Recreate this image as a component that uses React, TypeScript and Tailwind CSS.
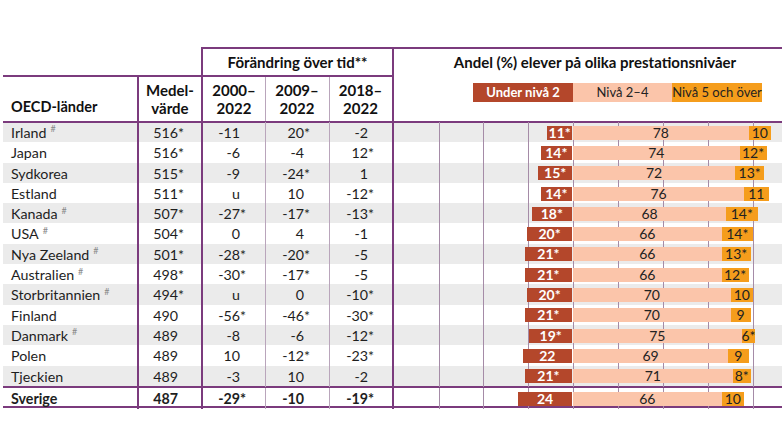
import React from 'react';

type Row = {
  land: string;
  hash?: boolean;
  medel: string;
  d00: string;
  d09: string;
  d18: string;
  under: string;
  mid: string;
  top: string;
};

const rows: Row[] = [
  { land: 'Irland', hash: true, medel: '516*', d00: '-11', d09: '20*', d18: '-2', under: '11*', mid: '78', top: '10' },
  { land: 'Japan', medel: '516*', d00: '-6', d09: '-4', d18: '12*', under: '14*', mid: '74', top: '12*' },
  { land: 'Sydkorea', medel: '515*', d00: '-9', d09: '-24*', d18: '1', under: '15*', mid: '72', top: '13*' },
  { land: 'Estland', medel: '511*', d00: 'u', d09: '10', d18: '-12*', under: '14*', mid: '76', top: '11' },
  { land: 'Kanada', hash: true, medel: '507*', d00: '-27*', d09: '-17*', d18: '-13*', under: '18*', mid: '68', top: '14*' },
  { land: 'USA', hash: true, medel: '504*', d00: '0', d09: '4', d18: '-1', under: '20*', mid: '66', top: '14*' },
  { land: 'Nya Zeeland', hash: true, medel: '501*', d00: '-28*', d09: '-20*', d18: '-5', under: '21*', mid: '66', top: '13*' },
  { land: 'Australien', hash: true, medel: '498*', d00: '-30*', d09: '-17*', d18: '-5', under: '21*', mid: '66', top: '12*' },
  { land: 'Storbritannien', hash: true, medel: '494*', d00: 'u', d09: '0', d18: '-10*', under: '20*', mid: '70', top: '10' },
  { land: 'Finland', medel: '490', d00: '-56*', d09: '-46*', d18: '-30*', under: '21*', mid: '70', top: '9' },
  { land: 'Danmark', hash: true, medel: '489', d00: '-8', d09: '-6', d18: '-12*', under: '19*', mid: '75', top: '6*' },
  { land: 'Polen', medel: '489', d00: '10', d09: '-12*', d18: '-23*', under: '22', mid: '69', top: '9' },
  { land: 'Tjeckien', medel: '489', d00: '-3', d09: '10', d18: '-2', under: '21*', mid: '71', top: '8*' },
];

const sverige: Row = { land: 'Sverige', medel: '487', d00: '-29*', d09: '-10', d18: '-19*', under: '24', mid: '66', top: '10' };

// 20 procentenheter = 45px
const PX = 2.25;
const gridLines = ['left-[45px]', 'left-[89px]', 'left-[134px]', 'left-[179px]', 'left-[224px]', 'left-[269px]', 'left-[314px]', 'left-[359px]'];

function Num({ v, wide }: { v: string; wide?: boolean }) {
  const star = v.endsWith('*');
  const n = star ? v.slice(0, -1) : v;
  return (
    <div className="flex h-full items-center">
      <span className={wide ? 'w-[39px] text-right' : 'w-[37px] text-right'}>{n}</span>
      {star && <span>*</span>}
    </div>
  );
}

function Bars({ r }: { r: Row }) {
  const num = (s: string) => parseFloat(s);
  return (
    <div className="relative h-full border-l-2 border-[#7b3b7d]">
      {gridLines.map((g) => (
        <div key={g} className={`absolute top-0 bottom-0 w-px bg-[#a58ba7] ${g}`} />
      ))}
      <div className="relative z-10 flex h-full items-center text-[14px] leading-none">
        <div className="flex w-[178px] justify-end">
          <div
            className="flex h-[14px] items-center justify-center whitespace-nowrap bg-[#b4472b] font-bold text-white"
            style={{ width: num(r.under) * PX }}
          >
            {r.under}
          </div>
        </div>
        <div
          className="ml-px flex h-[14px] items-center justify-center bg-[#fbc5aa] font-normal text-[#222]"
          style={{ width: num(r.mid) * PX }}
        >
          {r.mid}
        </div>
        <div
          className="flex h-[14px] items-center justify-center whitespace-nowrap bg-[#f59d1c] font-normal text-[#222]"
          style={{ width: num(r.top) * PX }}
        >
          {r.top}
        </div>
      </div>
    </div>
  );
}

function DataRow({ r, striped, last }: { r: Row; striped?: boolean; last?: boolean }) {
  return (
    <div
      className={`grid grid-cols-[134px_64px_64px_64px_63px_390px] ${
        last ? 'h-[22px] border-y-2 border-[#7b3b7d] font-bold' : 'h-[20.3px]'
      } ${striped ? 'bg-[#ebebeb]' : 'bg-white'}`}
    >
      <div className="flex items-center pl-[8px]">
        {r.land}
        {r.hash && <span className="ml-[4px] -mt-[7px] text-[9px] text-[#888]">#</span>}
      </div>
      <div className="border-l-2 border-[#7b3b7d]">
        <Num v={r.medel} wide />
      </div>
      <div className="border-l-2 border-[#7b3b7d]">
        <Num v={r.d00} />
      </div>
      <div className="border-l border-[#b9a5bb] pl-px">
        <Num v={r.d09} />
      </div>
      <div className="border-l border-[#b9a5bb] pl-px">
        <Num v={r.d18} />
      </div>
      <Bars r={r} />
    </div>
  );
}

export default function App() {
  return (
    <div className="h-[439px] w-[782px] overflow-hidden bg-white pl-[3px] pt-[47px] font-['Lato',sans-serif] text-[14.25px] text-[#1e1e1e]">
      {/* Rubriker */}
      <div className="grid grid-cols-[134px_64px_64px_64px_63px_390px] grid-rows-[28px_48px] text-[15px] font-bold text-[#111]">
        <div className="col-span-2" />
        <div className="col-span-3 flex items-center justify-center border-l-2 border-t-2 border-[#7b3b7d]">
          Förändring över tid**
        </div>
        <div className="row-span-2 flex flex-col border-y-2 border-l-2 border-[#7b3b7d]">
          <div className="flex h-[26px] items-center justify-center pl-[14px]">
            Andel (%) elever på olika prestationsnivåer
          </div>
          <div className="mt-[8px] flex h-[19px] whitespace-nowrap pl-[79px] text-[13px]">
            <div className="flex w-[100px] items-center justify-center bg-[#b4472b] text-white">Under nivå 2</div>
            <div className="flex w-[99px] items-center justify-center bg-[#fbc5aa] font-normal text-[#222]">Nivå 2–4</div>
            <div className="flex w-[90px] items-center justify-center bg-[#f59d1c] font-normal text-[#222]">Nivå 5 och över</div>
          </div>
        </div>
        <div className="flex items-end border-y-2 border-[#7b3b7d] pb-[3px] pl-[8px] text-[14.5px]">OECD-länder</div>
        <div className="flex flex-col items-center justify-center border-y-2 border-l-2 border-[#7b3b7d] leading-[18px]">
          <span>Medel-</span>
          <span>värde</span>
        </div>
        <div className="flex flex-col items-center justify-center border-y-2 border-l-2 border-[#7b3b7d] leading-[18px]">
          <span>2000–</span>
          <span>2022</span>
        </div>
        <div className="flex flex-col items-center justify-center border-y-2 border-[#7b3b7d] leading-[18px]">
          <div className="-ml-px flex h-full w-full flex-col items-center justify-center border-l border-[#b9a5bb]">
            <span>2009–</span>
            <span>2022</span>
          </div>
        </div>
        <div className="flex flex-col items-center justify-center border-y-2 border-[#7b3b7d] leading-[18px]">
          <div className="-ml-px flex h-full w-full flex-col items-center justify-center border-l border-[#b9a5bb]">
            <span>2018–</span>
            <span>2022</span>
          </div>
        </div>
      </div>

      {/* Länder */}
      <div className="-mt-px">
        {rows.map((r, i) => (
          <DataRow key={r.land} r={r} striped={i % 2 === 0} />
        ))}
        <DataRow r={sverige} last />
      </div>
    </div>
  );
}
